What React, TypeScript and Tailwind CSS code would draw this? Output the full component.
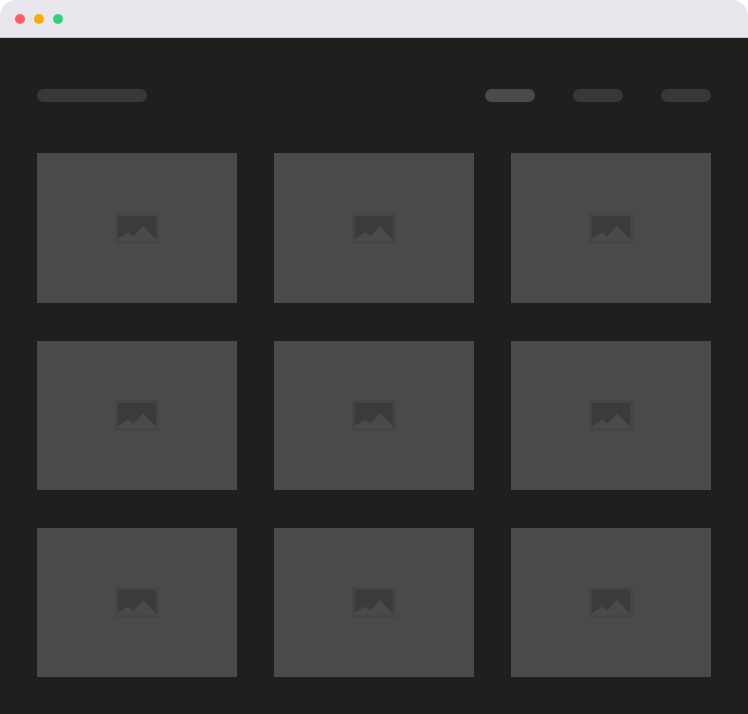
const Ph = () => (
  <div className="h-[149.6px] bg-[#4a4a48] flex items-center justify-center">
    <svg width="44" height="31" viewBox="0 0 44 31" className="block">
      <rect x="0" y="0" width="44" height="31" fill="#454543" />
      <rect x="3" y="3" width="38" height="25" fill="#3b3b39" />
      <path d="M3 28 L3 26 L13 19.5 L18.5 23.5 L28 13 L41 26.5 L41 28 Z" fill="#4a4a48" />
    </svg>
  </div>
);

export default function App() {
  return (
    <div className="w-[748px] h-[714px] bg-white overflow-hidden">
      <div className="h-[38px] bg-[#e8e7ed] rounded-t-[16px] flex items-center gap-[9.4px] pl-[15px] pt-[1px] border-b border-[#c9c9cc]">
        <span className="w-[9.6px] h-[9.6px] rounded-full bg-[#ff5f63]" />
        <span className="w-[9.6px] h-[9.6px] rounded-full bg-[#fdab00]" />
        <span className="w-[9.6px] h-[9.6px] rounded-full bg-[#35d07f]" />
      </div>
      <div className="h-[676px] bg-[#1f1f1d] pl-[37.4px] pr-[37px] pt-[50.8px]">
        <div className="flex items-center justify-between h-[13.1px]">
          <div className="w-[110px] h-[13.1px] rounded-full bg-[#383837]" />
          <div className="flex gap-[38px]">
            <div className="w-[49.9px] h-[13.1px] rounded-full bg-[#4a4a48]" />
            <div className="w-[49.9px] h-[13.1px] rounded-full bg-[#383837]" />
            <div className="w-[49.9px] h-[13.1px] rounded-full bg-[#383837]" />
          </div>
        </div>
        <div className="grid grid-cols-3 gap-x-[37.4px] gap-y-[37.6px] mt-[51.5px]">
          {Array.from({ length: 9 }).map((_, i) => (
            <Ph key={i} />
          ))}
        </div>
      </div>
    </div>
  );
}
